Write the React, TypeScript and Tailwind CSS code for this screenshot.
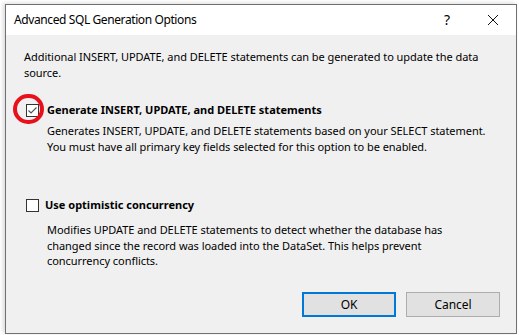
import React from 'react';

const font = { fontFamily: '"Noto Sans", "Liberation Sans", sans-serif' };

function CheckBox({ checked }: { checked?: boolean }) {
  return (
    <div className="flex h-[13px] w-[13px] shrink-0 items-center justify-center border border-[#333] bg-white">
      {checked && (
        <svg width="11" height="11" viewBox="0 0 11 11">
          <path d="M1.5 5.5 L4 8 L9.5 2.5" fill="none" stroke="#555" strokeWidth="1.2" />
        </svg>
      )}
    </div>
  );
}

export default function App() {
  return (
    <div className="h-[335px] w-[519px] overflow-hidden bg-white pl-[5px] pt-[4px] text-[11px] text-black" style={font}>
      <div className="flex h-[330px] w-[512px] flex-col border border-[#707070] shadow-[-2px_-1px_4px_rgba(0,0,0,0.15)]">
        {/* title bar */}
        <div className="flex h-[30px] shrink-0 items-center bg-white pl-[8px]">
          <span className="flex-1 text-[12px] tracking-[-0.4px]">Advanced SQL Generation Options</span>
          <span className="mr-[37px] text-[14px] leading-none">?</span>
          <svg width="12" height="12" viewBox="0 0 12 12" className="mr-[17px]">
            <path d="M1 1 L11 11 M11 1 L1 11" stroke="#111" strokeWidth="1" />
          </svg>
        </div>

        {/* body */}
        <div className="flex flex-1 flex-col whitespace-nowrap bg-[#f0f0f0] pl-[18px] pr-[14px] pt-[14px] leading-[16px] tracking-[-0.05px]">
          <p>
            Additional INSERT, UPDATE, and DELETE statements can be generated to update the data
            <br />
            source.
          </p>

          <div className="relative mt-[21px] flex items-center">
            <div className="ml-[2px]">
              <CheckBox checked />
            </div>
            <span className="ml-[8px] font-bold tracking-normal">Generate INSERT, UPDATE, and DELETE statements</span>
            {/* red highlight circle */}
            <div className="pointer-events-none absolute left-[-11px] top-[-8px] h-[30px] w-[31px] rounded-full border-[4px] border-[#e8101a]" />
          </div>
          <p className="ml-[23px] mt-[5px]">
            Generates INSERT, UPDATE, and DELETE statements based on your SELECT statement.
            <br />
            You must have all primary key fields selected for this option to be enabled.
          </p>

          <div className="mt-[42px] flex items-center">
            <div className="ml-[2px]">
              <CheckBox />
            </div>
            <span className="ml-[6px] font-bold tracking-normal">Use optimistic concurrency</span>
          </div>
          <p className="ml-[23px] mt-[9px] leading-[15.5px]">
            Modifies UPDATE and DELETE statements to detect whether the database has
            <br />
            changed since the record was loaded into the DataSet. This helps prevent
            <br />
            concurrency conflicts.
          </p>

          <div className="mt-auto mb-[16px] flex justify-end gap-[10px] pr-[2px]">
            <button className="h-[25px] w-[94px] border-2 border-[#0078d7] bg-[#e1e1e1] text-[12px]">OK</button>
            <button className="h-[25px] w-[94px] border border-[#adadad] bg-[#e1e1e1] text-[12px]">Cancel</button>
          </div>
        </div>
      </div>
    </div>
  );
}
